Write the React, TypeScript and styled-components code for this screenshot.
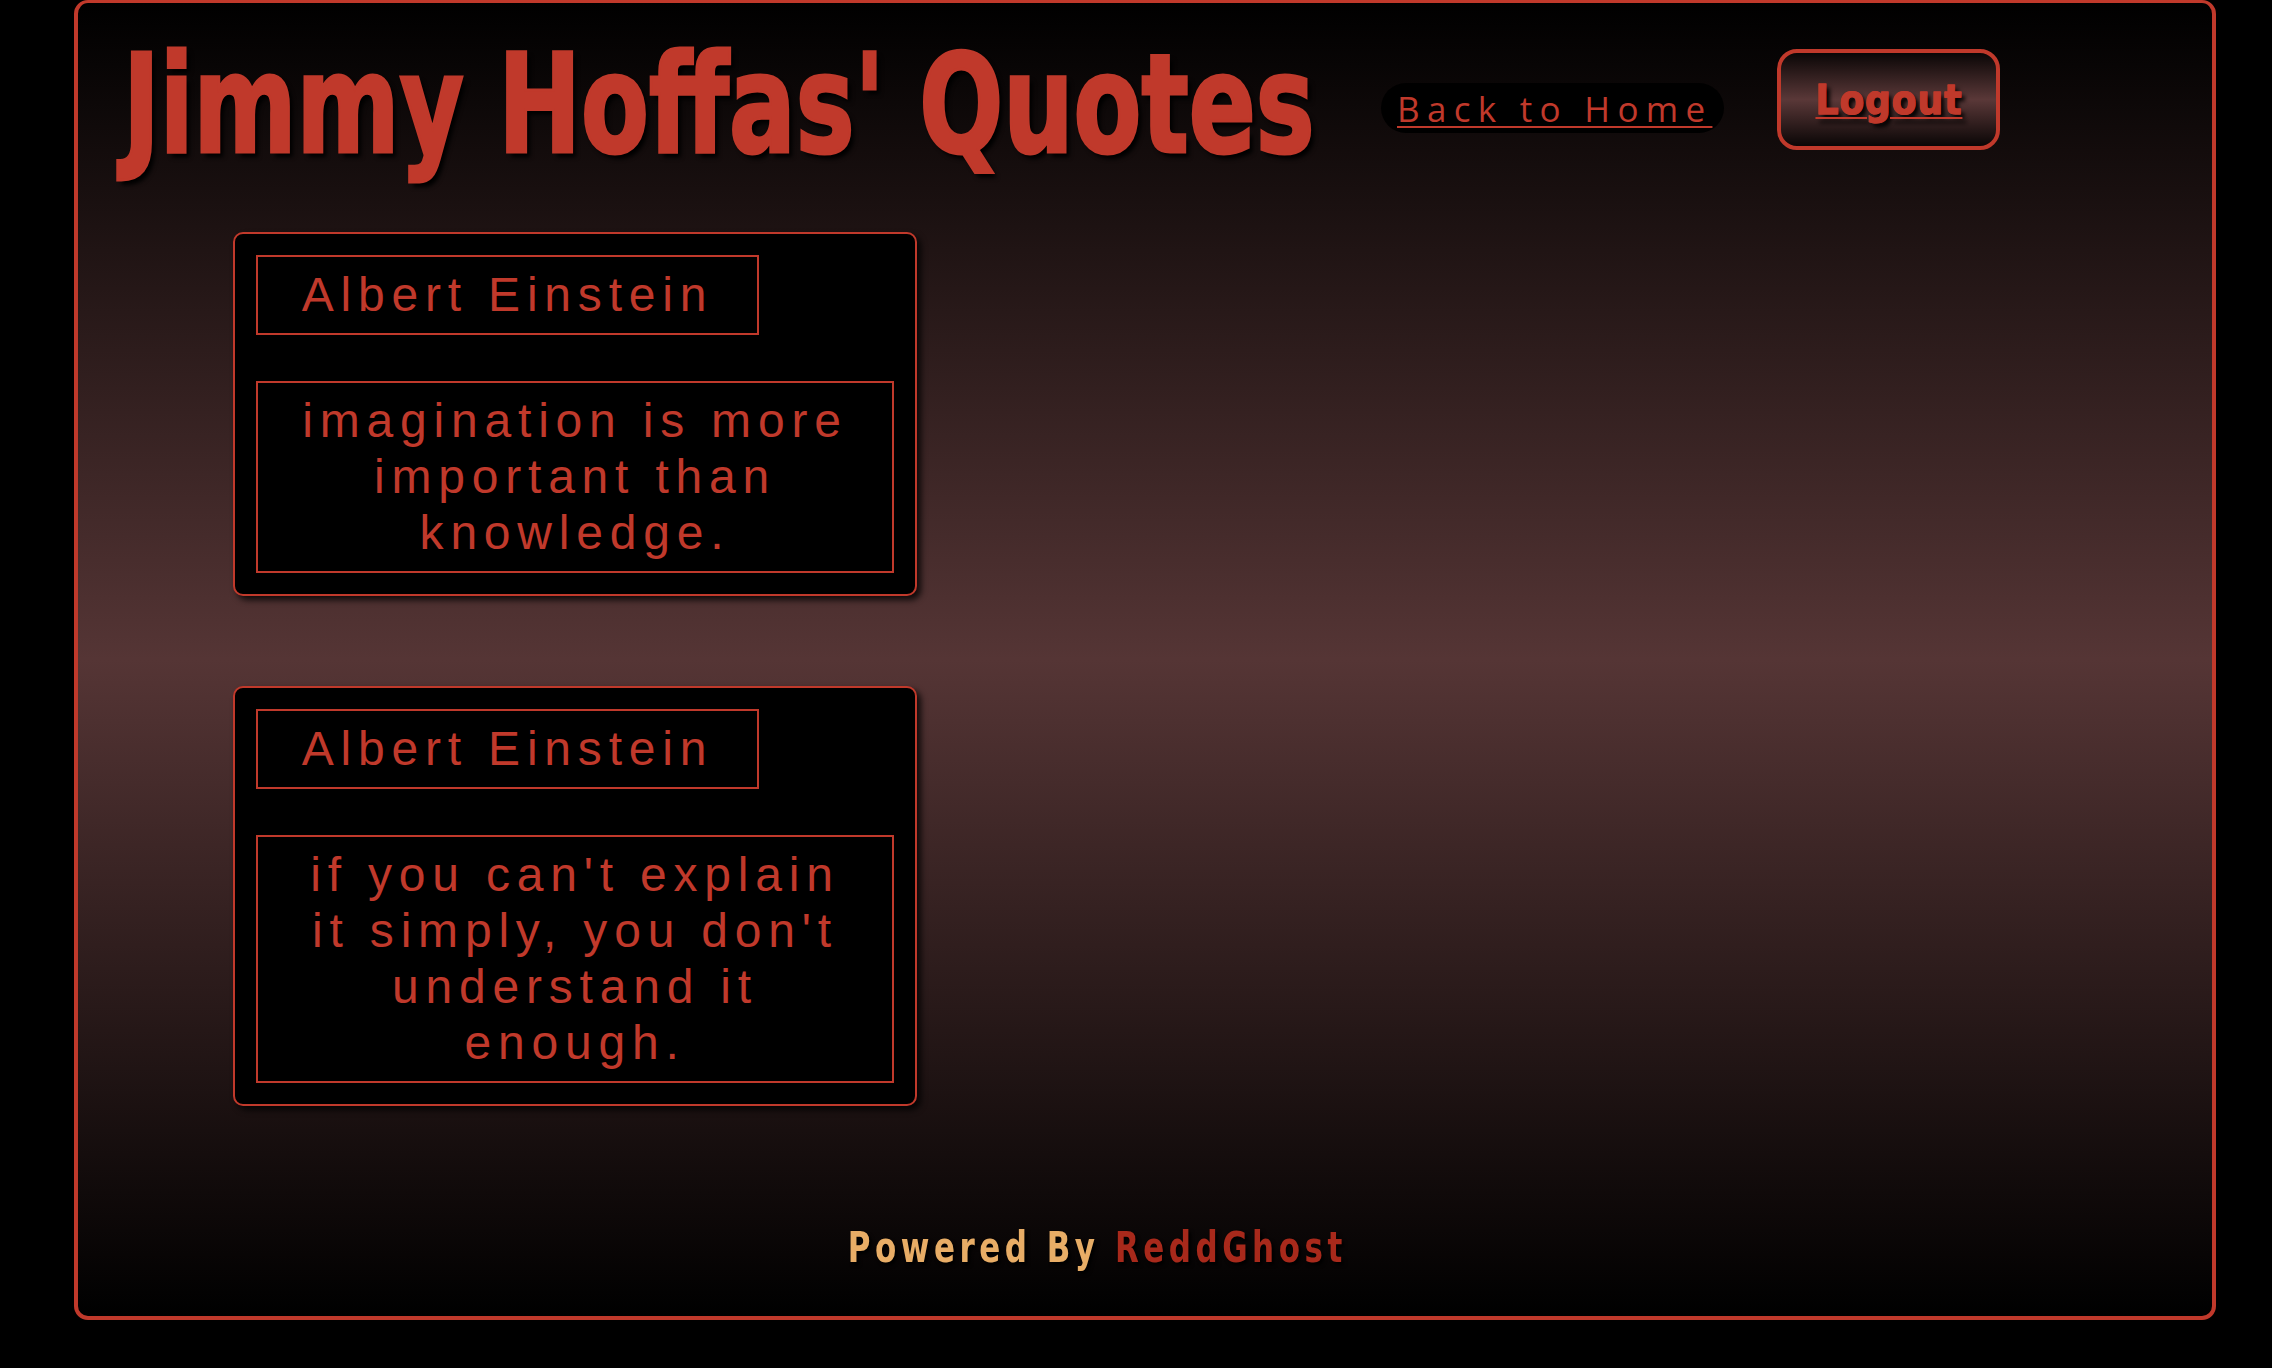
import React from "react";
import styled, { createGlobalStyle } from "styled-components";

const RED = "#c0392b";
const DISPLAY_FONT = `"Liberation Sans Narrow", "DejaVu Sans Condensed", "Liberation Sans", sans-serif`;

interface Quote {
  author: string;
  text: string;
}

const quotes: Quote[] = [
  { author: "Albert Einstein", text: "imagination is more important than knowledge." },
  { author: "Albert Einstein", text: "if you can't explain it simply, you don't understand it enough." },
];

const GlobalStyle = createGlobalStyle`
  html, body {
    margin: 0;
    padding: 0;
    background: #000;
  }
  * {
    box-sizing: border-box;
  }
`;

const App: React.FC = () => {
  return (
    <>
      <GlobalStyle />
      <StyledPage>
        <StyledHeader>
          <StyledTitle>
            <StyledSqueeze $scale={0.796}>Jimmy Hoffas' Quotes</StyledSqueeze>
          </StyledTitle>
          <StyledBackLink href="#">Back to Home</StyledBackLink>
          <StyledLogout type="button">Logout</StyledLogout>
        </StyledHeader>
        <StyledQuoteList>
          {quotes.map((q, i) => (
            <StyledCard key={i}>
              <StyledAuthor>{q.author}</StyledAuthor>
              <StyledQuoteText>{q.text}</StyledQuoteText>
            </StyledCard>
          ))}
        </StyledQuoteList>
        <StyledFooter>
          <StyledSqueeze $scale={0.82} $origin="center">
            <StyledPowered>Powered By</StyledPowered> <StyledBrand>ReddGhost</StyledBrand>
          </StyledSqueeze>
        </StyledFooter>
      </StyledPage>
    </>
  );
};

// no Impact in the sandbox, so condensed bold gets squeezed a bit more
const StyledSqueeze = styled.span<{ $scale: number; $origin?: string }>`
  display: inline-block;
  white-space: nowrap;
  transform: scaleX(${(p) => p.$scale});
  transform-origin: ${(p) => p.$origin || "left"} center;
`;

const StyledPage = styled.div`
  margin: 0 56px 0 74px;
  height: 1320px;
  border: 4px solid ${RED};
  border-top-width: 3px;
  border-radius: 14px;
  background: linear-gradient(to bottom, #000 0%, #553535 50%, #000 100%);
  display: flex;
  flex-direction: column;
`;

const StyledHeader = styled.div`
  display: flex;
  align-items: flex-start;
  padding: 33px 0 0 45px;
`;

const StyledTitle = styled.h1`
  margin: 0;
  width: 1188px;
  font-family: ${DISPLAY_FONT};
  font-weight: 700;
  font-size: 138px;
  line-height: 1;
  color: ${RED};
  -webkit-text-stroke: 3px ${RED};
  text-shadow: 5px 5px 5px #000;
  white-space: nowrap;
`;

const StyledBackLink = styled.a`
  margin: 47px 0 0 70px;
  height: 50px;
  display: flex;
  align-items: center;
  padding: 0 12px 0 16px;
  border-radius: 25px;
  background: #000;
  color: ${RED};
  font-family: "Open Sans", "Liberation Sans", sans-serif;
  font-size: 35px;
  letter-spacing: 7.3px;
  text-decoration: underline;
  text-decoration-thickness: 2px;
  text-underline-offset: 4px;
  white-space: nowrap;
`;

const StyledLogout = styled.button`
  margin: 13px 0 0 53px;
  width: 223px;
  height: 101px;
  padding: 0;
  border: 4px solid ${RED};
  border-radius: 20px;
  background: linear-gradient(to bottom, #0a0606 0%, #5a3838 50%, #0a0606 100%);
  color: ${RED};
  font-family: ${DISPLAY_FONT};
  font-weight: 700;
  font-size: 40px;
  letter-spacing: 1px;
  -webkit-text-stroke: 1px ${RED};
  text-decoration: underline;
  text-decoration-thickness: 2px;
  text-underline-offset: 3px;
  text-shadow: 4px 4px 4px #000;
  cursor: pointer;
`;

const StyledQuoteList = styled.div`
  display: flex;
  flex-direction: column;
  align-items: flex-start;
  gap: 90px;
  padding: 58px 0 0 155px;
`;

const StyledCard = styled.div`
  width: 684px;
  padding: 21px;
  border: 2px solid ${RED};
  border-radius: 10px;
  background: #000;
  box-shadow: 4px 4px 6px rgba(0, 0, 0, 0.8);
  display: flex;
  flex-direction: column;
  align-items: flex-start;
  gap: 46px;
`;

const boxText = `
  font-family: "Liberation Sans", Arial, sans-serif;
  font-size: 48px;
  line-height: 56px;
  letter-spacing: 6.8px;
  color: ${RED};
  text-align: center;
`;

const StyledAuthor = styled.div`
  ${boxText}
  width: 503px;
  padding: 10px 0;
  border: 2px solid ${RED};
`;

const StyledQuoteText = styled.div`
  ${boxText}
  width: 100%;
  padding: 10px 36px;
  border: 2px solid ${RED};
`;

const StyledFooter = styled.div`
  margin-top: auto;
  padding: 0 96px 47px 0;
  text-align: center;
  font-family: ${DISPLAY_FONT};
  font-weight: 700;
  font-size: 42px;
  line-height: 1;
  letter-spacing: 5.5px;
  text-shadow: 3px 3px 4px #000;
`;

const StyledPowered = styled.span`
  color: #e8ad66;
`;

const StyledBrand = styled.span`
  color: #a8291b;
`;

export default App;
